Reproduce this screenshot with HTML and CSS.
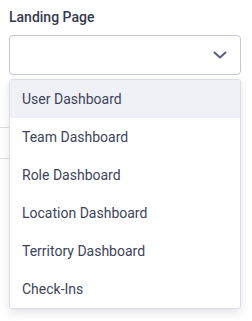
FILE: index.html
```html
<!DOCTYPE html>
<html lang="en">
<head>
    <meta charset="UTF-8">
    <meta name="viewport" content="width=device-width, initial-scale=1.0">
    <title>Landing Page</title>
    <link rel="stylesheet" href="styles.css">
</head>
<body>
    <main class="field">
        <label class="field-label" for="landing">Landing Page</label>
        <div class="select-wrap">
            <button class="select" id="landing" type="button">
                <svg class="chevron" width="14" height="8" viewBox="0 0 14 8">
                    <path d="M1.5 1.5 L7 6.5 L12.5 1.5" fill="none" stroke="#596079" stroke-width="2" stroke-linecap="round" stroke-linejoin="round"/>
                </svg>
            </button>
            <ul class="menu">
                <li class="option active">User Dashboard</li>
                <li class="option">Team Dashboard</li>
                <li class="option">Role Dashboard</li>
                <li class="option">Location Dashboard</li>
                <li class="option">Territory Dashboard</li>
                <li class="option">Check-Ins</li>
            </ul>
        </div>
        <!-- rows behind the open menu -->
        <div class="backdrop">
            <div class="backdrop-row"></div>
            <div class="backdrop-row"></div>
        </div>
    </main>
</body>
</html>
```

FILE: styles.css
```css
html, body {
    height: 100%;
}
body {
    margin: 0;
    padding: 0;
    background: #fff;
    font-family: Roboto, "Liberation Sans", sans-serif;
    color: #3d4459;
}
.field {
    box-sizing: border-box;
    min-height: 321px;
    padding: 8px 0 0 0;
}
.field-label {
    display: block;
    margin-left: 9px;
    font-size: 14px;
    font-weight: 500;
    line-height: 18px;
    color: #343a4f;
}
.select-wrap {
    position: relative;
    margin: 9px 11px 0 9px;
}
.select {
    display: flex;
    align-items: center;
    justify-content: flex-end;
    width: 100%;
    height: 40px;
    padding: 0 13px 0 0;
    background: #fff;
    border: 1px solid #c5c8d3;
    border-radius: 4px;
    cursor: pointer;
}
.menu {
    position: absolute;
    top: 44px;
    left: 0;
    right: 0;
    z-index: 2;
    list-style: none;
    margin: 0;
    padding: 0;
    background: #fff;
    border: 1px solid #dcdee6;
    border-radius: 3px;
    box-shadow: 0 4px 10px rgba(40, 45, 70, 0.12);
}
.option {
    height: 38px;
    line-height: 38px;
    padding-left: 12px;
    font-size: 14px;
    color: #3d4459;
}
.option.active {
    background: #f0f1f6;
}
.backdrop {
    margin-top: 22px;
    width: 10px;
}
.backdrop-row {
    height: 30px;
    border-bottom: 1px solid #dcdee6;
}
```
